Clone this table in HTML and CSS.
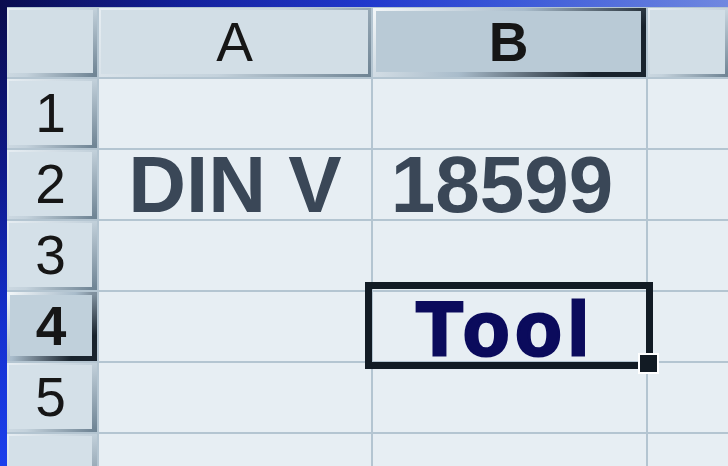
FILE: index.html
```html
<!DOCTYPE html>
<html>
<head>
<meta charset="utf-8">
<link rel="stylesheet" href="styles.css">
</head>
<body>
<div class="screen">
  <div class="topbar"></div>
  <div class="main">
    <div class="leftbar"></div>
    <div class="sheet">
      <div class="hdr corner"></div>
      <div class="hdr col">A</div>
      <div class="hdr col sel">B</div>
      <div class="hdr col"></div>

      <div class="hdr row">1</div>
      <div class="cell"></div>
      <div class="cell"></div>
      <div class="cell"></div>

      <div class="hdr row">2</div>
      <div class="cell big">DIN V</div>
      <div class="cell big num">18599</div>
      <div class="cell"></div>

      <div class="hdr row">3</div>
      <div class="cell"></div>
      <div class="cell"></div>
      <div class="cell"></div>

      <div class="hdr row sel">4</div>
      <div class="cell"></div>
      <div class="cell active"><span class="tool">Tool</span><div class="selbox"></div><div class="handle"></div></div>
      <div class="cell"></div>

      <div class="hdr row">5</div>
      <div class="cell"></div>
      <div class="cell"></div>
      <div class="cell"></div>

      <div class="hdr row"></div>
      <div class="cell"></div>
      <div class="cell"></div>
      <div class="cell"></div>
    </div>
  </div>
</div>
</body>
</html>
```
FILE: styles.css
```css
html, body {
  margin: 0;
  padding: 0;
}
body {
  width: 728px;
  height: 466px;
  overflow: hidden;
  font-family: "Liberation Sans", Arial, sans-serif;
  background: #b6c7d3;
}
.screen {
  display: flex;
  flex-direction: column;
  width: 728px;
  height: 466px;
}
.topbar {
  height: 7px;
  flex: none;
  background: linear-gradient(to right, #0a0c4e 0%, #14209a 25%, #2038cc 50%, #3a58d8 70%, #7088e0 100%);
}
.main {
  flex: 1;
  display: flex;
  min-height: 0;
}
.leftbar {
  width: 7px;
  flex: none;
  background: linear-gradient(to bottom, #0a0c4e 0%, #0e1888 35%, #1430d0 70%, #1c40ec 100%);
}
.sheet {
  flex: 1;
  display: grid;
  grid-template-columns: 90px 272px 273px 1fr;
  grid-template-rows: 69px repeat(6, 69px);
  gap: 2px;
  padding-top: 1px;
  background: #b4c5d1;
  overflow: hidden;
}
.hdr {
  box-sizing: border-box;
  background: #d2dee6;
  color: #161616;
  font-size: 55px;
  display: flex;
  align-items: center;
  justify-content: center;
  border: 3px solid;
  border-image: linear-gradient(135deg, #e6edf2 0%, #c4d2dc 55%, #6f8494 100%) 1;
}
.hdr.corner {
  border-width: 2px 4px 4px 2px;
}
.hdr.col {
  border-width: 2px 3px 3px 2px;
}
.hdr.row {
  border-width: 2px 5px 3px 2px;
  background: #d4e0e8;
}
.hdr.sel {
  font-weight: bold;
  background: #b9cad6;
  border-width: 3px 5px 5px 3px;
  border-image: linear-gradient(135deg, #f2f6f8 0%, #a9bccb 45%, #19232d 85%) 1;
}
.hdr.row.sel {
  background: #c0d0db;
}
.cell {
  background: #e7eef3;
  display: flex;
  align-items: center;
  justify-content: center;
}
.big {
  font-weight: bold;
  font-size: 80px;
  color: #3a4757;
}
.big.num {
  padding-right: 15px;
}
.active {
  position: relative;
}
.tool {
  font-weight: bold;
  font-size: 76px;
  color: #0b0b5c;
  -webkit-text-stroke: 3px #0b0b5c;
  letter-spacing: 6px;
  padding-right: 8px;
  padding-top: 3px;
  position: relative;
  z-index: 1;
}
.selbox {
  position: absolute;
  left: -8px;
  top: -10px;
  right: -7px;
  bottom: -8px;
  border: 7px solid #121b24;
  z-index: 2;
}
.handle {
  position: absolute;
  right: -13px;
  bottom: -13px;
  width: 21px;
  height: 21px;
  box-sizing: border-box;
  border: 2px solid #ffffff;
  background: #121b24;
  z-index: 3;
}
```
